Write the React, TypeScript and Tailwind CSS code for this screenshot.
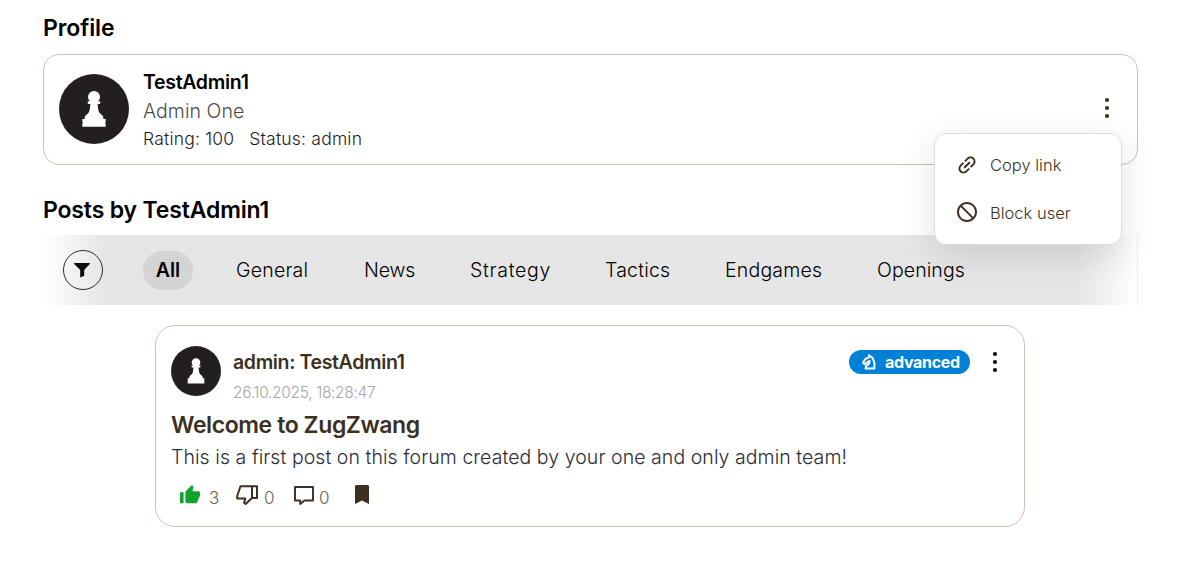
import type { ReactNode } from "react";
import { MdBlock, MdLink, MdThumbUp } from "react-icons/md";

function PawnAvatar({ className }: { className: string }) {
  return (
    <svg viewBox="0 0 210 210" className={`shrink-0 ${className}`}>
      <circle cx="105" cy="105" r="105" fill="#231f20" />
      <g fill="#fff">
        <circle cx="105" cy="69" r="18" />
        <rect x="86" y="82" width="38" height="8" rx="3" />
        <path d="M94 88h22c0 10 1 19 4 26 3 6 9 8 12 13 1 3 1 5 1 8h7v9h-1v5h1v9H70v-9h1v-5h-1v-9h7c0-3 0-5 1-8 3-5 9-7 12-13 3-7 4-16 4-26z" />
      </g>
    </svg>
  );
}

function Dots({ className }: { className: string }) {
  return (
    <svg viewBox="0 0 24 24" fill="currentColor" className={`size-6 shrink-0 ${className}`}>
      <circle cx="12" cy="4" r="2.1" />
      <circle cx="12" cy="12" r="2.1" />
      <circle cx="12" cy="20" r="2.1" />
    </svg>
  );
}

function KnightIcon() {
  return (
    <svg viewBox="0 0 14 16" fill="none" stroke="#fff" strokeWidth="2" strokeLinejoin="round" strokeLinecap="round" className="h-4 w-[14px]">
      <path d="M3.600 14.500h8.800V8.800L10.600 4 7 1.200v2L3.200 5.200 1 8.600l1.600 1.600L7.400 7" />
      <path d="M7.600 7.200 7 9.800l-3 2.400-.4 2" />
    </svg>
  );
}

function ThumbDownIcon() {
  return (
    <svg viewBox="0 0 22 20" fill="none" stroke="#3b3022" strokeWidth="2" strokeLinejoin="round" className="mt-[2px] h-5 w-[22px]">
      <path d="M4.500 1.200H21V13H16L9.600 18.900 8.100 17.700 9.300 13.500H1.200V11z" />
      <path d="M16 1.200v11.800" />
    </svg>
  );
}

const tabs = [
  { label: "General", box: "w-[98px] tracking-[0.2px]" },
  { label: "News", box: "w-[76px] tracking-[-0.15px]" },
  { label: "Strategy", box: "w-[105px] tracking-[0.7px]" },
  { label: "Tactics", box: "w-[90px] tracking-[0.2px]" },
  { label: "Endgames", box: "w-[122px] tracking-[0.2px]" },
  { label: "Openings", box: "w-[112px] tracking-[0.1px]" },
];

function MenuItem({ icon, children }: { icon: ReactNode; children: ReactNode }) {
  return (
    <button className="flex h-12 items-center gap-[11px] pl-5 text-left text-[16.5px] font-light text-[#3b3022]">
      {icon}
      {children}
    </button>
  );
}

export default function App() {
  return (
    <div className="h-[584px] w-full overflow-hidden bg-white pl-[43px] font-['Inter',sans-serif] whitespace-nowrap text-black">
      <div className="w-[1095px] pt-[14px]">
        <h2 className="h-[27px] text-[23px] leading-[29px] font-semibold tracking-[-0.1px]">Profile</h2>

        <section className="relative mt-[13px] flex h-[111px] rounded-[16px] border border-[#cfc0b0] pl-[15px]">
          <PawnAvatar className="mt-[19px] size-[70px]" />
          <div className="ml-[14px] pt-[13px]">
            <div className="h-7 text-[19.5px] leading-7 font-semibold tracking-[-0.3px]">TestAdmin1</div>
            <div className="h-[30px] text-[19.5px] leading-[30px] font-light tracking-[0.05px] text-[#4a4a4a]">Admin One</div>
            <div className="flex h-[26px] gap-[15px] text-[17.5px] leading-[25px] font-light tracking-[0.2px] text-[#1c1c1c]">
              <span>Rating: 100</span>
              <span>Status: admin</span>
            </div>
          </div>
          <Dots className="mt-[41px] mr-[18px] ml-auto text-[#3b3022]" />

          <div className="absolute top-[78px] right-[15px] z-10 flex h-[112px] w-[188px] flex-col rounded-[12px] border border-[#dcdcdc] bg-white pt-[7px] shadow-[0_10px_36px_rgba(0,0,0,0.12)]">
            <MenuItem icon={<MdLink className="size-6 -rotate-45" />}>Copy link</MenuItem>
            <MenuItem icon={<MdBlock className="-mt-[2px] size-6 -scale-x-100" />}>Block user</MenuItem>
          </div>
        </section>

        <h2 className="mt-[30px] h-[29px] text-[23px] leading-[31px] font-semibold tracking-[-0.15px]">Posts by TestAdmin1</h2>

        <nav className="mt-[11px] flex h-[70px] items-center border-r border-[#eeeeee] bg-[linear-gradient(to_right,#fff_0,#e6e6e6_60px,#e6e6e6_1034px,#fff_1094px)] pl-5">
          <button className="flex size-10 items-center justify-center rounded-full border border-[#2b2b33]">
            <svg viewBox="0 0 16 15" className="mr-[2px] h-[15px] w-4" fill="#0c0c0c">
              <path d="M.6 0h14.800c.5 0 .7.6.4 1L10.200 7v5.800L6.200 14.600V7L.2 1C-.1.600.1 0 .6 0z" />
            </svg>
          </button>
          <div className="ml-10 flex items-center gap-[30px] text-[19.5px] font-light">
            <button className="h-[39px] w-[50px] rounded-[20px] bg-[#d4d4d4] pt-[2px] text-center font-semibold">All</button>
            {tabs.map((tab) => (
              <button key={tab.label} className={`h-[39px] pt-[2px] pl-[13px] text-left ${tab.box}`}>
                {tab.label}
              </button>
            ))}
          </div>
        </nav>

        <article className="mt-5 ml-28 h-[202px] w-[870px] rounded-[20px] border border-[#cfc0b0] px-[15px] pt-5">
          <header className="flex h-[62px]">
            <PawnAvatar className="size-[50px]" />
            <div className="ml-3">
              <div className="h-8 text-[19.5px] leading-8 font-semibold tracking-[-0.36px] text-[#3b3022]">admin: TestAdmin1</div>
              <div className="h-[30px] text-[15.5px] leading-[30px] font-light tracking-[-0.33px] text-[#a6a6a6]">26.10.2025, 18:28:47</div>
            </div>
            <div className="mt-1 ml-auto flex h-6 w-[121px] items-center gap-[9px] rounded-full bg-[#0080d6] pl-[13px] text-[16px] font-bold tracking-[-0.3px] text-white">
              <KnightIcon />
              advanced
            </div>
            <Dots className="mt-1 ml-[13px] mr-[2px]" />
          </header>
          <h3 className="h-[34px] text-[23px] leading-[34px] font-semibold tracking-[-0.41px] text-[#3b3022]">Welcome to ZugZwang</h3>
          <p className="h-[30px] text-[19.5px] leading-[30px] font-light tracking-[0.06px] text-[#2c2c33]">
            This is a first post on this forum created by your one and only admin team!
          </p>
          <footer className="flex h-[50px] pl-2 pt-[11px] text-[17px] leading-[31px] font-light text-[#6a6258]">
            <MdThumbUp className="mt-px size-[22px] text-[#12a12c]" />
            <span className="ml-[8px] w-[27px]">3</span>
            <ThumbDownIcon />
            <span className="ml-[6px] w-[30px]">0</span>
            <svg viewBox="0 0 20 20" className="mt-[3px] size-5" fill="none" stroke="#3b3022" strokeWidth="1.900" strokeLinejoin="round">
              <path d="M1 1h18v13.500h-8.500L6.200 18v-3.500H1z" />
            </svg>
            <span className="ml-[5px] w-[36px]">0</span>
            <svg viewBox="0 0 14 19" className="mt-[2px] h-[19px] w-[14px]" fill="#3b3022">
              <path d="M1.500 0h11c.8 0 1.500.700 1.500 1.500V19l-7-3.600L0 19V1.500C0 .700.700 0 1.500 0z" />
            </svg>
          </footer>
        </article>
      </div>
    </div>
  );
}
